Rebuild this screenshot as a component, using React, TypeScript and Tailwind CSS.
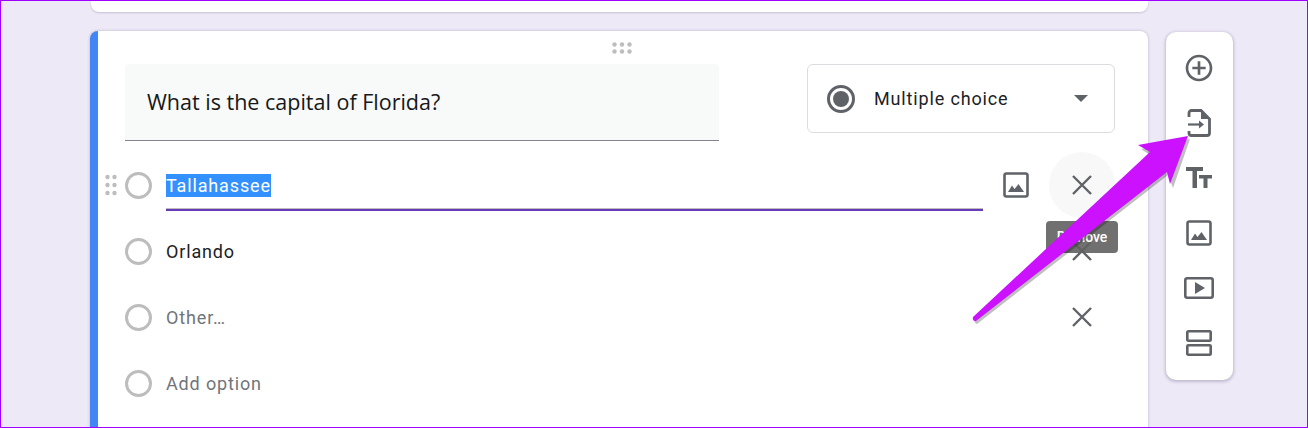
import React from 'react';

const XIcon = () => (
  <svg width="22" height="22" viewBox="0 0 22 22" className="text-[#5f6368]">
    <path d="M2 2L20 20M20 2L2 20" stroke="currentColor" strokeWidth="2.4" fill="none" />
  </svg>
);

const ImageIcon = () => (
  <svg width="26" height="26" viewBox="0 0 26 26" className="text-[#5f6368]">
    <rect x="1.5" y="1.5" width="23" height="23" rx="2" stroke="currentColor" strokeWidth="2.6" fill="none" />
    <path d="M5 20L9 13.5L11.5 17L15.5 12L21 20Z" fill="currentColor" />
  </svg>
);

// six dots, laid flat on the card top and upright beside a row
const DragFlat = () => (
  <svg width="20" height="12" viewBox="0 0 20 12" className="mt-[1px] mr-[2px]">
    {[2.5, 9.5].map((y) =>
      [2.5, 10, 17.5].map((x) => <circle key={`${x}-${y}`} cx={x} cy={y} r="2.2" fill="#bdbdbd" />)
    )}
  </svg>
);

const DragUpright = () => (
  <svg width="13" height="22" viewBox="0 0 13 22" className="mr-[7px]">
    {[3, 11, 19].map((y) =>
      [2.5, 9.5].map((x) => <circle key={`${x}-${y}`} cx={x} cy={y} r="2.2" fill="#bdbdbd" />)
    )}
  </svg>
);

const Radio = () => <span className="w-[27px] h-[27px] shrink-0 rounded-full border-[3px] border-[#bdbdbd]" />;

const Toolbar = () => (
  <div className="w-[67px] h-[348px] mt-[31px] bg-white rounded-[10px] shadow-[0_1px_3px_1px_rgba(60,50,90,0.25)] flex flex-col items-center pt-[8px] pr-px text-[#5f6368]">
    <div className="h-[55px] flex items-center justify-center">
      <svg width="32" height="32" viewBox="0 0 24 24">
        <path fill="currentColor" d="M13 7h-2v4H7v2h4v4h2v-4h4v-2h-4V7zm-1-5C6.48 2 2 6.48 2 12s4.48 10 10 10 10-4.48 10-10S17.52 2 12 2zm0 18c-4.41 0-8-3.59-8-8s3.59-8 8-8 8 3.59 8 8-3.59 8-8 8z" />
      </svg>
    </div>
    <div className="h-[55px] flex items-center justify-center">
      <svg width="24" height="28" viewBox="0 0 24 28">
        <path d="M2 8V4a2.5 2.5 0 0 1 2.500-2.500H14L22.500 10V24a2.500 2.500 0 0 1-2.500 2.500H4.500A2.500 2.500 0 0 1 2 24V22" stroke="currentColor" strokeWidth="2.800" fill="none" />
        <path d="M14 1.500L22.500 10H14Z" fill="currentColor" />
        <path d="M1 15.500H13" stroke="currentColor" strokeWidth="2.200" />
        <path d="M12 11.500L17 15.500L12 19.500Z" fill="currentColor" />
      </svg>
    </div>
    <div className="h-[55px] flex items-center justify-center">
      <svg width="26" height="22" viewBox="0 0 26 22">
        <path fill="currentColor" d="M0 0H17V4H11V21H6.500V4H0Z" />
        <path fill="currentColor" d="M13 8H26V11.500H21.500V21H17.500V11.500H13Z" />
      </svg>
    </div>
    <div className="h-[55px] flex items-center justify-center">
      <ImageIcon />
    </div>
    <div className="h-[55px] flex items-center justify-center">
      <svg width="30" height="22" viewBox="0 0 30 22">
        <rect x="1.300" y="1.300" width="27.400" height="19.400" rx="2" stroke="currentColor" strokeWidth="2.600" fill="none" />
        <path d="M11 5L21 11L11 17Z" fill="currentColor" />
      </svg>
    </div>
    <div className="h-[55px] flex items-center justify-center">
      <svg width="26" height="26" viewBox="0 0 26 26">
        <rect x="1.300" y="1.300" width="23.400" height="9.400" rx="1" stroke="currentColor" strokeWidth="2.600" fill="none" />
        <rect x="1.300" y="15.300" width="23.400" height="9.400" rx="1" stroke="currentColor" strokeWidth="2.600" fill="none" />
      </svg>
    </div>
  </div>
);

export default function App() {
  return (
    <div className="relative h-[428px] overflow-hidden border border-[#a000ff] bg-[#eee9f7] font-['Roboto',sans-serif]">
      <div className="flex pl-[89px] gap-[18px] items-start">
        <div className="w-[1058px]">
          <div className="ml-px h-[11px] bg-white rounded-b-lg shadow-[0_1px_2px_rgba(60,50,90,0.22)]" />
          <div className="relative mt-[19px] h-[420px] bg-white rounded-l-lg rounded-r-lg border-l-8 border-[#4285f4] shadow-[0_0_3px_rgba(60,50,90,0.3)]">
            <div className="h-[33px] flex items-center justify-center">
              <DragFlat />
            </div>
            <div className="flex items-start pl-[27px] pr-[33px] justify-between">
              <div className="w-[594px] h-[77px] bg-[#f8f9f9] border-b border-[#80868b] rounded-t flex items-center pl-[22px] font-['Open_Sans',sans-serif] text-[21.5px] text-[#171717]">
                What is the capital of Florida?
              </div>
              <div className="w-[308px] h-[69px] border border-[#dadce0] rounded-md flex items-center pl-[19px] pr-[26px]">
                <span className="w-[28px] h-[28px] rounded-full border-[3px] border-[#5f6368] flex items-center justify-center">
                  <span className="w-[16px] h-[16px] rounded-full bg-[#5f6368]" />
                </span>
                <span className="ml-[19px] text-[18px] tracking-[0.85px] text-[#202124]">Multiple choice</span>
                <span className="ml-auto w-0 h-0 border-x-[7px] border-t-[7px] border-x-transparent border-t-[#5f6368]" />
              </div>
            </div>

            {/* option rows */}
            <div className="mt-[11px]">
              <div className="h-[66px] flex items-center pl-[7px]">
                <DragUpright />
                <Radio />
                <div className="ml-[14px] w-[817px] h-[50px] mt-[2px] flex items-center border-b-2 border-[#673ab7] shadow-[inset_0_-1px_0_#bdbdbd]">
                  <span className="bg-[#3390ff] text-white text-[18px] leading-[23px] tracking-[0.85px]">Tallahassee</span>
                </div>
                <div className="ml-[20px] w-[26px] h-[26px]"><ImageIcon /></div>
                <div className="ml-[20px] w-[66px] h-[66px] pr-px rounded-full bg-[#f8f8f8] flex items-center justify-center">
                  <XIcon />
                </div>
              </div>
              <div className="h-[66px] flex items-center pl-[27px]">
                <Radio />
                <span className="ml-[14px] text-[18px] tracking-[0.85px] text-[#202124]">Orlando</span>
                <div className="ml-auto mr-[33px] w-[66px] pr-px flex justify-center"><XIcon /></div>
              </div>
              <div className="h-[66px] flex items-center pl-[27px]">
                <Radio />
                <span className="ml-[14px] text-[18px] tracking-[0.85px] text-[#70757a]">Other…</span>
                <div className="ml-auto mr-[33px] w-[66px] pr-px flex justify-center"><XIcon /></div>
              </div>
              <div className="h-[66px] flex items-center pl-[27px]">
                <Radio />
                <span className="ml-[14px] text-[18px] tracking-[0.85px] text-[#70757a]">Add option</span>
              </div>
            </div>
          </div>
        </div>
        <Toolbar />
      </div>

      {/* tooltip over the remove button */}
      <div className="absolute left-[1045px] top-[220px] w-[72px] h-[32px] rounded bg-[#616161]/90 flex items-center justify-center text-white text-[14px] font-medium">
        Remove
      </div>

      {/* annotation arrow */}
      <svg className="absolute left-0 top-0 pointer-events-none" width="1306" height="426" viewBox="1 1 1306 426">
        <path d="M973 320L1152 155L1140 147L1189 137L1172 186L1167 173L976 322Z" fill="#000" opacity="0.25" transform="translate(1 2)" />
        <path d="M973 317L1150 152L1138 145L1188 136L1170 184L1167 172L976 321Q972 321 973 317Z" fill="#cc11ff" />
      </svg>
    </div>
  );
}
